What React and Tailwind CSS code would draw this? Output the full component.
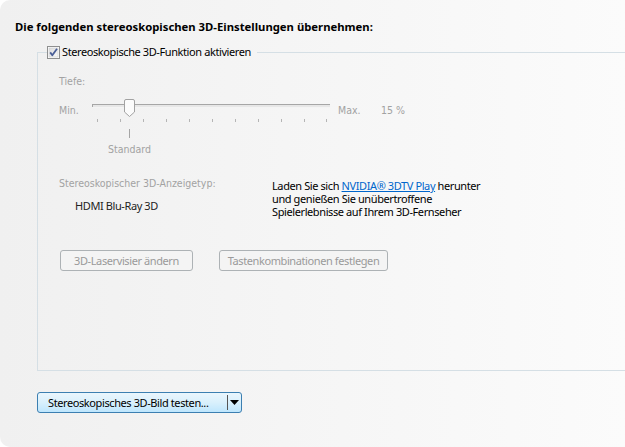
import React from "react";

function CheckBox() {
  return (
    <svg width="13" height="13" viewBox="0 0 13 13" className="shrink-0">
      <defs>
        <linearGradient id="cbg" x1="0" y1="0" x2="1" y2="1">
          <stop offset="0" stopColor="#dcdcdc" />
          <stop offset="1" stopColor="#fbfbfb" />
        </linearGradient>
      </defs>
      <rect x="0.5" y="0.5" width="12" height="12" fill="#fff" stroke="#8e8f8f" />
      <rect x="2" y="2" width="9" height="9" fill="url(#cbg)" stroke="#c9cbce" strokeWidth="0.6" />
      <path d="M3.2 6.4 L5.3 9.3 L10 2.8" fill="none" stroke="#4a5f97" strokeWidth="1.8" strokeLinejoin="round" />
    </svg>
  );
}

function Slider() {
  const ticks = [5, 28, 51, 74, 97, 120, 143, 166, 189, 212, 234];
  return (
    <svg width="240" height="45" viewBox="0 0 240 45" className="block">
      <rect x="0" y="7" width="238" height="4" fill="#e7e7e7" />
      <line x1="0" y1="7.5" x2="238" y2="7.5" stroke="#a6a6a6" />
      <line x1="0.5" y1="7" x2="0.5" y2="11" stroke="#a6a6a6" />
      <line x1="0" y1="10.5" x2="238" y2="10.5" stroke="#f4f4f4" />
      {ticks.map((x) => (
        <line key={x} x1={x + 0.5} y1="22" x2={x + 0.5} y2="25" stroke="#b5b5b5" />
      ))}
      <line x1="37.5" y1="32" x2="37.5" y2="41" stroke="#a5a5a5" />
      <path
        d="M32.5 4 Q32.5 2.5 34 2.5 H41 Q42.5 2.5 42.5 4 V15 L37.5 19.5 L32.5 15 Z"
        fill="#fbfbfb"
        stroke="#a2a2a2"
      />
    </svg>
  );
}

export default function App() {
  const dis = "font-['DejaVu_Sans_Condensed','DejaVu_Sans',sans-serif] text-[10.5px] leading-[14px] text-[#a2a2a2]";
  const ui = "font-['Noto_Sans',sans-serif] text-[11px] tracking-[-0.4px]";
  return (
    <div className="w-[625px] h-[447px] bg-white overflow-hidden">
      <div className="h-full rounded-l-[10px] bg-linear-to-r from-[#f0f0f0] to-[#fbfbfb] pl-[15px] pt-[19px]">
        <div className="font-['Noto_Sans',sans-serif] text-[11.3px] font-bold text-black leading-[16px]">
          Die folgenden stereoskopischen 3D-Einstellungen übernehmen:
        </div>
        <fieldset className="mt-[10px] ml-[22px] border-l border-t border-b border-[#d5dfe5] pl-[9px] pb-[99px]">
          <legend className="flex items-center pr-[6px]">
            <CheckBox />
            <span className={`${ui} ml-[2px] leading-[14px] text-black`}>
              Stereoskopische 3D-Funktion aktivieren
            </span>
          </legend>
          <div className="pl-[12px]">
            <div className={`${dis} mt-[15px]`}>Tiefe:</div>
            <div className="flex items-start mt-[9px]">
              <div className={`${dis} w-[33px] mt-[6px]`}>Min.</div>
              <div className="w-[240px]">
                <Slider />
                <div className={`${dis} ml-[16px]`}>Standard</div>
              </div>
              <div className={`${dis} ml-[6px] w-[43px] mt-[6px]`}>Max.</div>
              <div className={`${dis} mt-[6px]`}>15 %</div>
            </div>
            <div className="flex items-start mt-[20px]">
              <div className="w-[213px]">
                <div className={dis}>Stereoskopischer 3D-Anzeigetyp:</div>
                <div className={`${ui} leading-[14px] text-[#222] ml-[16px] mt-[9px]`}>HDMI Blu-Ray 3D</div>
              </div>
              <div className={`${ui} leading-[13px] text-black mt-[3px]`}>
                <div className="h-[13px]">
                  Laden Sie sich{" "}
                  <span className="text-[#0066cc] underline">NVIDIA® 3DTV Play</span>{" "}
                  herunter
                </div>
                <div className="h-[13px]">und genießen Sie unübertroffene</div>
                <div className="h-[13px]">Spielerlebnisse auf Ihrem 3D-Fernseher</div>
              </div>
            </div>
            <div className="flex mt-[32px] ml-[1px] gap-[26px]">
              <div className={`${ui} w-[133px] h-[21px] rounded-[3px] border border-[#adb2b5] bg-[#f4f4f4] text-[#9a9a9a] flex items-center justify-center leading-none`}>
                3D-Laservisier ändern
              </div>
              <div className={`${ui} w-[169px] h-[21px] rounded-[3px] border border-[#adb2b5] bg-[#f4f4f4] text-[#9a9a9a] flex items-center justify-center leading-none`}>
                Tastenkombinationen festlegen
              </div>
            </div>
          </div>
        </fieldset>
        <div className="mt-[21px] ml-[22px] w-[205px] h-[21px] rounded-[3px] border border-[#3c7fb1] bg-linear-to-b from-[#eaf6fd] via-[#d9f0fc] to-[#bee6fd] flex items-center">
          <div className={`${ui} flex-1 text-black leading-none pl-[10px]`}>
            Stereoskopisches 3D-Bild testen...
          </div>
          <div className="w-px h-[15px] bg-[#555]" />
          <div className="w-[13px] flex items-center justify-center">
            <svg width="9" height="5" viewBox="0 0 9 5"><path d="M0 0 H9 L4.5 5 Z" fill="#000" /></svg>
          </div>
        </div>
      </div>
    </div>
  );
}
